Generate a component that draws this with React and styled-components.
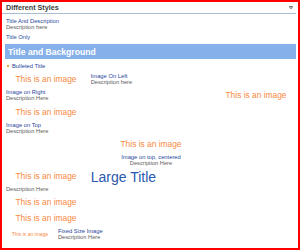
import React from "react";
import styled, { createGlobalStyle } from "styled-components";

const GlobalStyle = createGlobalStyle`
  html, body {
    margin: 0;
    padding: 0;
    background: #fff;
  }
  body {
    font-family: "Liberation Sans", Arial, sans-serif;
  }
`;

const Frame = styled.div`
  width: 300px;
  height: 250px;
  box-sizing: border-box;
  border: 2px solid #f00;
  overflow: hidden;
  background: #fff;
`;

const Header = styled.div`
  display: flex;
  align-items: center;
  justify-content: space-between;
  height: 11px;
  margin-right: 2px;
  padding: 0 3px 0 4px;
  border-bottom: 1px solid #a9bcd3;
  font-size: 7.2px;
  font-weight: bold;
  color: #3d3d3d;
`;

const MenuIcon = styled.svg`
  display: block;
  width: 4px;
  height: 3px;
`;

const List = styled.div`
  display: flex;
  flex-direction: column;
  gap: 3.9px;
  padding: 3.9px 2px 0 4px;
`;

const Title = styled.div`
  font-size: 5.8px;
  line-height: 6px;
  color: #27459c;
  white-space: nowrap;
`;

const Desc = styled.div`
  font-size: 5.7px;
  line-height: 6.5px;
  color: #5b5b5b;
  white-space: nowrap;
`;

const Band = styled.div`
  display: flex;
  align-items: center;
  height: 15px;
  margin-left: -1px;
  padding-left: 3px;
  background: #85b0ea;
  color: #fff;
  font-size: 8.6px;
  font-weight: bold;
`;

const Bulleted = styled.div`
  display: flex;
  align-items: center;
  gap: 3px;
  margin-left: 1px;

  &::before {
    content: "";
    width: 2px;
    height: 2px;
    background: #f2a33a;
  }
`;

const ImageBox = styled.div`
  flex: none;
  width: ${(p) => p.$w || 80}px;
  height: 12px;
  line-height: 12px;
  text-align: center;
  font-size: ${(p) => p.$size || 8.4}px;
  color: #f7893f;
  white-space: nowrap;
`;

const Row = styled.div`
  display: flex;
  align-items: flex-start;
  justify-content: ${(p) => (p.$spread ? "space-between" : "flex-start")};
  gap: ${(p) => p.$gap || 4.7}px;
`;

const Stack = styled.div`
  display: flex;
  flex-direction: column;
  align-items: ${(p) => (p.$center ? "center" : "flex-start")};
  gap: ${(p) => p.$gap || 0}px;
`;

const LargeTitle = styled.div`
  font-size: 14px;
  line-height: 15.5px;
  color: #2a57b0;
  white-space: nowrap;
`;

const Block = ({ title, desc }) => (
  <Stack>
    <Title>{title}</Title>
    <Desc>{desc}</Desc>
  </Stack>
);

const App = () => (
  <>
    <GlobalStyle />
    <Frame>
      <Header>
        <span>Different Styles</span>
        <MenuIcon viewBox="0 0 4 3">
          <rect x="0" y="0" width="4" height="1.5" fill="#7a7a7a" />
          <rect x="1" y="1.5" width="2" height="1.5" fill="#9a9a9a" />
        </MenuIcon>
      </Header>
      <List>
        <Block title="Title And Description" desc="Description here" />
        <Title>Title Only</Title>
        <Band>Title and Background</Band>
        <Bulleted>
          <Title>Bulleted Title</Title>
        </Bulleted>
        <Row>
          <ImageBox>This is an image</ImageBox>
          <Block title="Image On Left" desc="Description here" />
        </Row>
        <Row $spread>
          <Block title="Image on Right" desc="Description Here" />
          <ImageBox>This is an image</ImageBox>
        </Row>
        <Stack $gap={3.9}>
          <ImageBox>This is an image</ImageBox>
          <Block title="Image on Top" desc="Description Here" />
        </Stack>
        <Stack $center $gap={3.9}>
          <ImageBox>This is an image</ImageBox>
          <Stack $center>
            <Title>Image on top, centered</Title>
            <Desc>Description Here</Desc>
          </Stack>
        </Stack>
        <Stack>
          <Row>
            <ImageBox>This is an image</ImageBox>
            <LargeTitle>Large Title</LargeTitle>
          </Row>
          <Desc>Description Here</Desc>
        </Stack>
        <ImageBox>This is an image</ImageBox>
        <ImageBox>This is an image</ImageBox>
        <Row $gap={4}>
          <ImageBox $w={48} $size={5}>
            This is an image
          </ImageBox>
          <Block title="Fixed Size Image" desc="Description Here" />
        </Row>
      </List>
    </Frame>
  </>
);

export default App;
